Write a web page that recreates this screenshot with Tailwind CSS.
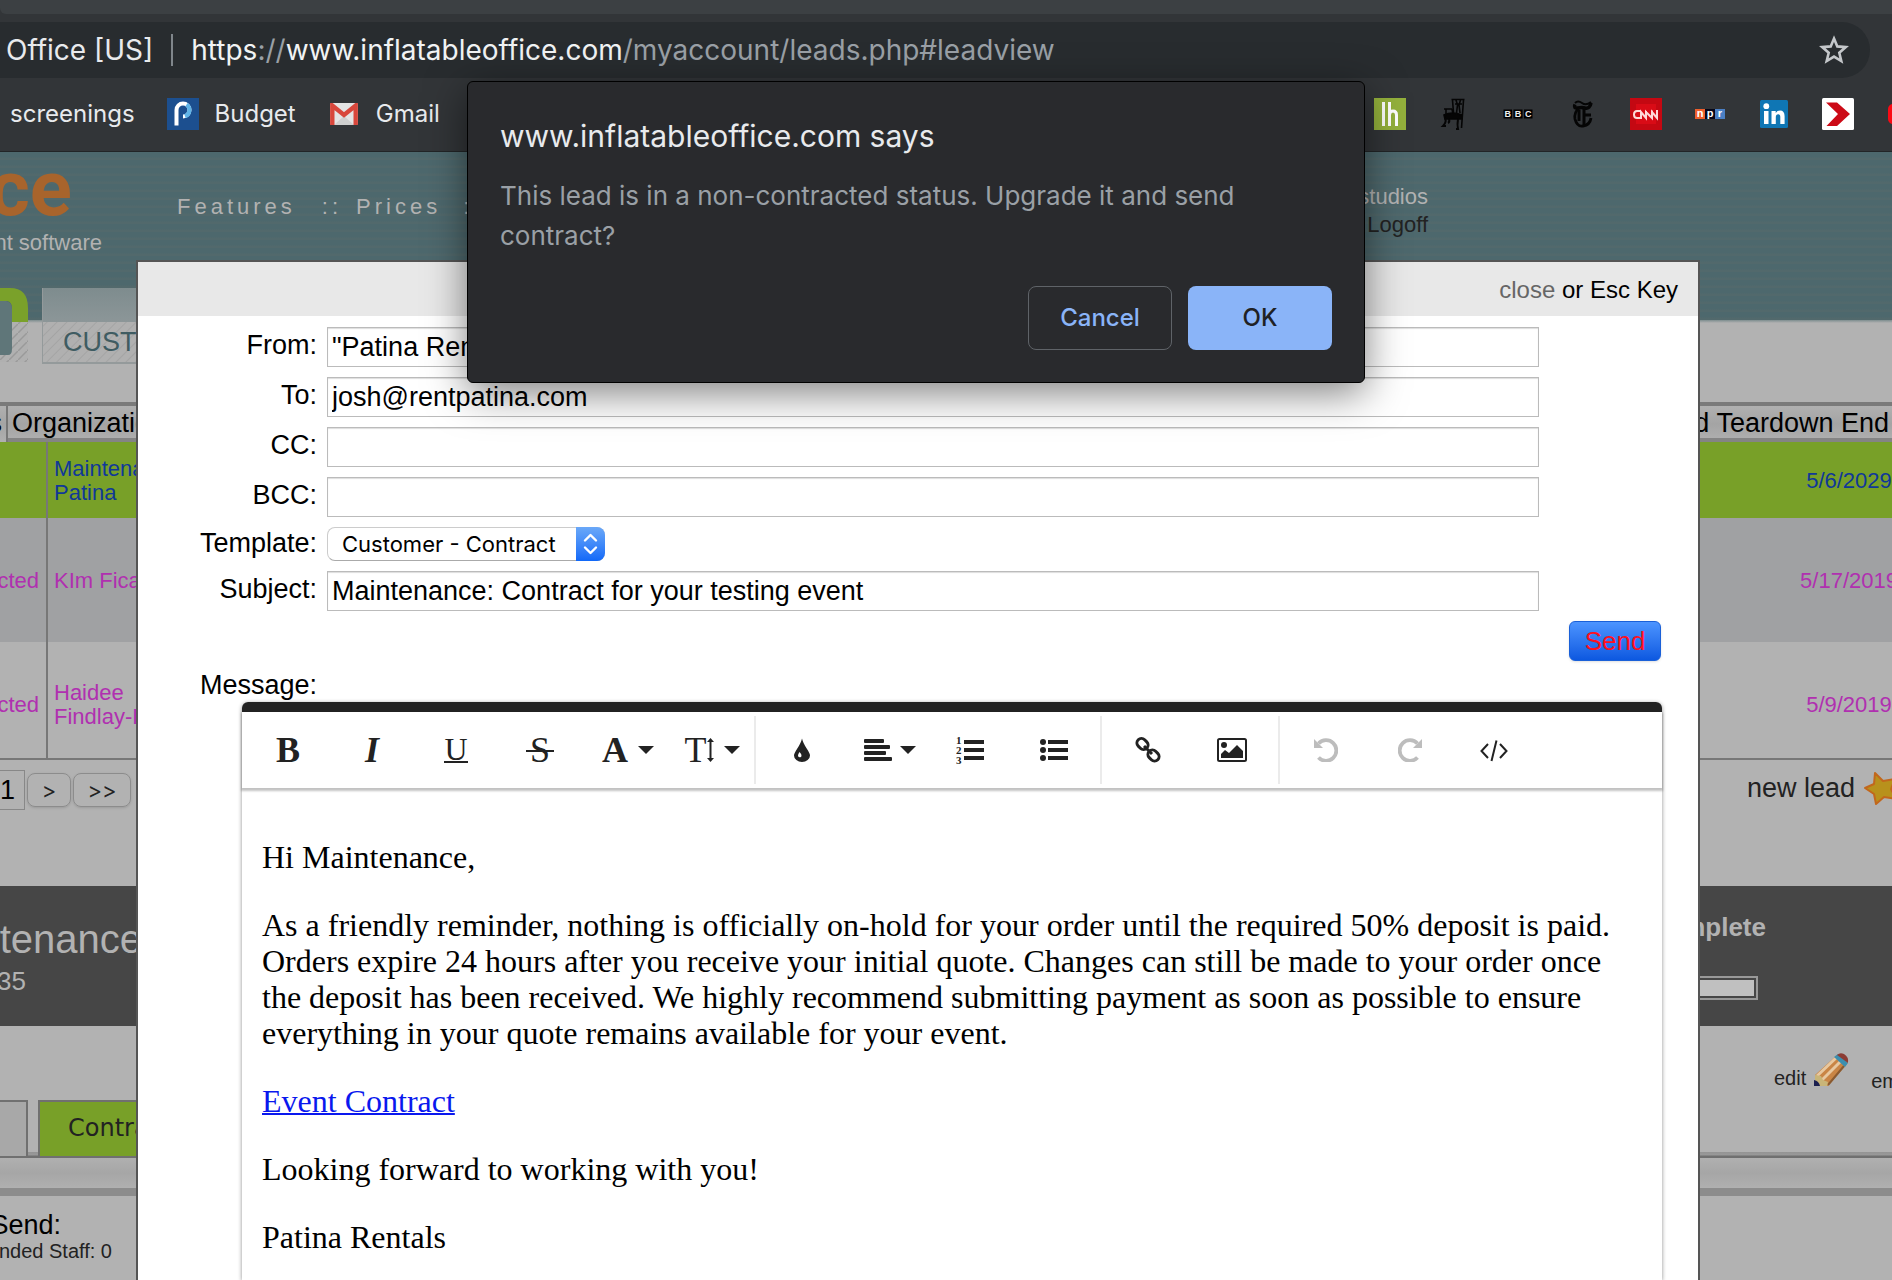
<!DOCTYPE html>
<html lang="en">
<head>
    <meta charset="UTF-8">
    <meta name="viewport" content="width=device-width, initial-scale=1.0">
    <title>InflatableOffice - Leads</title>
    <script src="https://cdn.jsdelivr.net/npm/@tailwindcss/browser@4"></script>
</head>
<body class="relative h-screen overflow-hidden flex flex-col bg-[#b2b2b2] font-['Liberation_Sans',Arial,sans-serif] text-black">

    <!-- Browser bars -->
    <header class="shrink-0 bg-[#323538] border-b border-[#222527] font-[Inter,sans-serif] text-[#e8eaed]">
        <div class="h-[14px] bg-[#3c4043] rounded-bl-md"></div>
        <div class="mt-2 mr-[22px] h-14 rounded-r-full bg-[#282c2f] flex items-center pl-[6px] pr-5 text-[28px] whitespace-nowrap">
            <span>Office [US]</span>
            <span class="w-[2px] h-8 mx-[18px] bg-[#80868b]"></span>
            <span class="text-[#9aa0a6]"><span class="text-[#f1f3f4]">https</span>://<span class="text-[#f1f3f4]">www.inflatableoffice.com</span>/myaccount/leads.php#leadview</span>
            <button class="ml-auto" aria-label="Bookmark this page">
                <svg class="w-8 h-8" viewBox="0 0 32 32" fill="none" stroke="#c4c7ca" stroke-width="2.6"><path d="M16 4.5 19.3 12.400 27.800 13.100 21.300 18.700 23.300 27 16 22.600 8.700 27 10.700 18.700 4.200 13.100 12.700 12.400Z"/></svg>
            </button>
        </div>
        <nav class="h-[73px] flex items-center pl-[10px] pb-[2px] text-[24px] whitespace-nowrap">
            <a href="#">screenings</a>
            <a href="#" class="flex items-center gap-4 ml-8">
                <svg class="w-8 h-8" viewBox="0 0 32 32"><rect width="32" height="32" fill="#1c4f8f"/><path d="M9.500 27.500V12a6.500 6.500 0 1 1 6.500 6.500" fill="none" stroke="#fff" stroke-width="4"/><path d="M19.500 6.600a6.500 6.500 0 0 1-1.500 11.600" fill="none" stroke="#5fb4e8" stroke-width="4"/></svg>
                Budget
            </a>
            <a href="#" class="flex items-center gap-[18px] ml-[34px]">
                <svg class="w-7 h-[22px]" viewBox="0 0 28 22"><rect width="28" height="22" rx="2" fill="#e4e4e4"/><path d="M4 22 14 13 24 22Z" fill="#cfcfcf"/><path d="M2.300 22V2.500L14 12 25.700 2.500V22" fill="none" stroke="#d8473c" stroke-width="4.400"/></svg>
                Gmail
            </a>
            <div class="ml-auto flex items-center gap-8">
                <a href="#" aria-label="Lifehacker"><svg class="w-8 h-8" viewBox="0 0 32 32"><rect width="32" height="32" fill="#94b13c"/><path d="M9.500 4v24M15.500 4v24M15.500 17q0-4 3.500-4t3.500 4v11" fill="none" stroke="#fff" stroke-width="3"/></svg></a>
                <a href="#" aria-label="Chair"><svg class="w-8 h-8" viewBox="0 0 32 32" fill="none" stroke="#050505" stroke-width="1.600"><path d="M13.500 1.500h13M14.500 2l1 13M25.500 2l-2 28M18 2l1.500 5-1 8M22.500 2 21 7l1 8M17 6h7"/><path d="M6 11h8M8 11v6M14 11l1 5"/><path d="M6 17q8-4 18 0v4H7Z" fill="#050505"/><path d="M7 20q2 4-2 8h3M20 21q-1 6 0 10h-2M11 21q1 3-1 4" stroke-width="2"/></svg></a>
                <a href="#" aria-label="BBC News"><svg class="w-8 h-8" viewBox="0 0 32 32" font-family="Liberation Sans" font-size="9" font-weight="700" fill="#eee" text-anchor="middle"><path d="M1.500 11.500h8.500v9H1.500zM11.500 11.500h9v9h-9zM22 11.500h8.500v9H22z" fill="#000"/><text x="5.800" y="19.300">B</text><text x="16" y="19.300">B</text><text x="26.200" y="19.300">C</text></svg></a>
                <a href="#" aria-label="The New York Times"><svg class="w-8 h-8" viewBox="0 0 32 32" fill="none" stroke="#050505"><path d="M9 6.500q-2 4 3 3.500 4-1 7 0 5 1 6-5" stroke-width="3.500"/><path d="M9 5q3-3 7 0t9-1" stroke-width="2"/><path d="M13 10q-5 4-4 11 2 8 8 7 7-1 8-8" stroke-width="2.800"/><path d="M18 9v18M18 17h7M13 12v11" stroke-width="3"/></svg></a>
                <a href="#" aria-label="CNN"><svg class="w-8 h-8" viewBox="0 0 32 32"><rect width="32" height="32" fill="#c40812"/><rect x="6" y="6" width="20" height="20" fill="#d90b16"/><path d="M11 13H7q-3 0-3 3.500T7 20h4V14l5 6V13M16 20V14l6 6V12.500M22 20l0-6 5 6V12" fill="none" stroke="#ffd9d9" stroke-width="2"/></svg></a>
                <a href="#" aria-label="NPR"><svg class="w-8 h-8" viewBox="0 0 32 32" font-family="Liberation Sans" font-weight="700" font-size="11" fill="#fff" text-anchor="middle"><path d="M1 11h10v10H1z" fill="#ee5f2c"/><path d="M11 11h10v10H11z" fill="#06071a"/><path d="M21 11h10v10H21z" fill="#4a7fc4"/><text x="6" y="19">n</text><text x="16" y="18.500">p</text><text x="26" y="19">r</text></svg></a>
                <a href="#" aria-label="LinkedIn"><svg class="w-8 h-8" viewBox="0 0 32 32" fill="#fff"><rect x="2" y="2" width="28" height="28" rx="1.500" fill="#0f76b4"/><circle cx="8.300" cy="8.200" r="2.900"/><path d="M6 13h4.500v13H6zM13.500 13h4.200v2q1.500-2.400 4.300-2.400 4.600 0 4.600 5.600V26h-4.300v-7q0-2.800-2.100-2.800-2.400 0-2.400 2.900V26h-4.300z"/></svg></a>
                <a href="#" aria-label="Bookmark"><svg class="w-8 h-8" viewBox="0 0 32 32"><rect width="32" height="32" rx="1.500" fill="#fff"/><path d="M4 4.500h11L28 16 15 28H4.500L16 16Z" fill="#cc0a16"/></svg></a>
                <a href="#" aria-label="YouTube"><svg class="w-[6px] h-8" viewBox="0 0 6 32"><rect x="2" y="6" width="20" height="20" rx="5" fill="#fa0a14"/></svg></a>
            </div>
        </nav>
    </header>

    <!-- Lead list, dimmed by the open mail window -->
    <main class="relative flex-1 overflow-hidden">
        <section class="h-[250px] bg-[linear-gradient(transparent_168px,#7d8d8f_168px,#b2b2b2_171px),repeating-linear-gradient(#4d686d_0px,#4d686d_5px,#52696c_6px,#52696c_8px)]">
            <div class="h-[136px] flex items-start pt-[2px] whitespace-nowrap text-[22px] leading-7 text-[#b2b2b2]">
                <div class="w-[102px] flex flex-col items-end">
                    <div class="pr-[30px] font-[Roboto,sans-serif] font-bold text-[78px] leading-[70px] text-[#a8642c]">ce</div>
                    <div class="mt-[5px]">nt software</div>
                </div>
                <nav class="flex pt-[39px] ml-[75px] tracking-[4px]">
                    <a href="#">Features</a>
                    <span class="ml-[26px] mr-[14px]">::</span>
                    <a href="#">Prices</a>
                    <span class="ml-[22px]">::</span>
                </nav>
                <div class="ml-auto mr-[464px] pt-[29px] text-right">
                    <div>studios</div>
                    <a href="#" class="text-[#222]">Logoff</a>
                </div>
            </div>
            <div class="flex gap-[14px]">
                <svg class="w-7 h-[78px] shrink-0" viewBox="0 0 28 78">
                    <defs><pattern id="hatch" width="9" height="9" patternUnits="userSpaceOnUse"><path d="M-2 11 11-2" stroke="#9a9a9a" stroke-width="1.500"/></pattern></defs>
                    <path d="M0 34h28v40H0z" fill="#b0b0b0"/><path d="M0 34h28v40H0z" fill="url(#hatch)"/>
                    <path d="M0 0h10q18 0 18 20v14H12V20q0-6-5-7H0z" fill="#7aa12a"/>
                    <path d="M0 13h6q6 1 6 8v40q0 6-4 6H0z" fill="#5f7679"/>
                </svg>
                <a href="#" class="h-[76px] w-[180px] border-l border-b-2 border-[#949a9b] bg-[linear-gradient(#7e8c8e,#8c9698_34px,transparent_34px),repeating-linear-gradient(135deg,#b0b0b0_0px,#b0b0b0_5px,#a4a4a4_6px,#b0b0b0_7px)] pl-5 pt-[34px] text-[27px] leading-[40px] text-[#3f5c62]">CUSTOMERS</a>
            </div>
        </section>

        <table class="block w-full text-[22px] leading-6 text-[#b030b0]">
            <thead class="block">
                <tr class="flex h-10 border-t-4 border-[#7a7a7a] bg-linear-to-b from-[#b0b0b0] via-[#a4a4a4] to-[#b0b0b0] text-[27px] leading-[34px] text-black whitespace-nowrap">
                    <th class="w-2 h-[36px] flex justify-end pr-1 border-r-2 border-[#777] font-normal">Status</th>
                    <th class="flex-1 h-9 pl-1 border-b-4 border-[#848484] text-left font-normal">Organization</th>
                    <th class="h-9 pr-[3px] border-b-4 border-[#848484] font-normal">End Teardown End</th>
                </tr>
            </thead>
            <tbody class="block border-b-2 border-[#777]">
                <tr class="flex h-[76px] bg-[#78a028] text-[#103898]">
                    <td class="w-12 border-r-2 border-[#777]"></td>
                    <td class="flex-1 flex items-center pl-[6px] pt-px">Maintenance<br>Patina</td>
                    <td class="w-[86px] pt-px flex items-center justify-center">5/6/2029</td>
                </tr>
                <tr class="flex h-[124px] bg-[#a0a1a3]">
                    <td class="w-12 pr-[7px] pt-px flex items-center justify-end border-r-2 border-[#777]">contracted</td>
                    <td class="flex-1 flex items-center pl-[6px] pt-px">KIm Ficaro</td>
                    <td class="w-[86px] pt-px flex items-center justify-center">5/17/2019</td>
                </tr>
                <tr class="flex h-[116px]">
                    <td class="w-12 pr-[7px] pt-[10px] flex items-center justify-end border-r-2 border-[#777]">contracted</td>
                    <td class="flex-1 flex items-center pl-[6px] pt-[10px]">Haidee<br>Findlay-Hill</td>
                    <td class="w-[86px] pt-[10px] flex items-center justify-center">5/9/2019</td>
                </tr>
            </tbody>
        </table>

        <section class="h-[126px] flex items-start justify-between pt-[10px]">
            <div class="flex items-center gap-[2px] font-[Inter,sans-serif] text-[22px] text-[#222]">
                <input type="text" value="1" aria-label="Page" class="w-[25px] h-10 border border-l-0 border-[#888] text-[27px] text-black font-['Liberation_Sans',Arial,sans-serif]">
                <button class="w-11 h-[34px] border border-[#8c8c8c] rounded-lg shadow-sm">&gt;</button>
                <button class="w-[58px] h-[34px] border border-[#8c8c8c] rounded-lg shadow-sm">&gt;&gt;</button>
            </div>
            <a href="#" class="flex items-center gap-[9px] text-[27px] leading-9 text-[#222]">
                new lead
                <svg class="w-7 h-9" viewBox="0 0 28 36"><path d="M11 3 19 11 31 9 27 19 32 29 20 27 12 34 10 24 1 18 10 14Z" fill="#b8911c" stroke="#c2671c" stroke-width="2" stroke-linejoin="round"/></svg>
            </a>
        </section>

        <section class="h-[140px] flex justify-between bg-[#464646] text-[26px] text-[#b2b2b2]">
            <div class="pt-[29px]">
                <h2 class="w-[142px] flex justify-end text-[40px] leading-[48px]">Maintenance</h2>
                <div class="mt-1 w-[26px] flex justify-end leading-7">35</div>
            </div>
            <div class="pt-[26px] mr-[126px] font-bold leading-[30px]">
                Complete
                <div class="mt-[34px] mr-2 h-6 border-2 border-[#999] p-[2px]"><div class="h-full bg-[#c0c0c0]"></div></div>
            </div>
        </section>

        <section class="h-[132px] flex justify-between bg-[linear-gradient(transparent_126px,#949494_126px,#999_129px,#707070_130px)]">
            <nav class="flex items-end gap-[10px] font-['DejaVu_Sans',sans-serif] text-[24px] text-[#222]">
                <a href="#" class="w-7 h-[58px] border-2 border-l-0 border-[#707070] bg-[#a8a8a8]" aria-label="Details"></a>
                <a href="#" class="w-[160px] h-[58px] border-2 border-[#707070] bg-[#78a028] pl-7 leading-[52px]">Contract</a>
            </nav>
            <div class="w-[118px] pt-[26px] flex items-start text-[20px] leading-5 text-[#222]">
                <a href="#" class="flex items-end gap-[7px]">
                    edit
                    <svg class="w-9 h-9" viewBox="0 0 36 36">
                        <path d="M2 23 24 3 34 12 15 34H6Z" fill="#c98545"/>
                        <path d="M4 24 24 5M9 28 29 8" stroke="#e8c8a0" stroke-width="3"/>
                        <path d="M15 33 31 14" stroke="#8a5a30" stroke-width="2"/>
                        <path d="M2 23 8 24 10 28 15 30 14 34H2Z" fill="#c9b578"/>
                        <path d="M21 5 25 2 35 11 32 15Z" fill="#3c8fb0"/>
                        <path d="M24 3q3-3 7-1 5 3 4 9Z" fill="#8c3c34"/>
                        <path d="M1 34V28q5 1 6 6Z" fill="#1c2050"/>
                    </svg>
                </a>
                <a href="#" class="ml-[22px] pt-[19px]">email</a>
            </div>
        </section>
        <div class="h-[38px] border-b-8 border-[#8c8c8c] bg-linear-to-b from-[#b0b0b0] via-[#a6a6a6] to-[#b0b0b0]"></div>
        <section class="pt-4 leading-[26px] whitespace-nowrap">
            <div class="w-[61px] flex justify-end text-[27px]">Send:</div>
            <div class="w-[112px] flex justify-end text-[20px] text-[#222]">Recommended Staff: 0</div>
        </section>

        <!-- Mail window -->
        <div class="absolute top-[108px] bottom-0 left-[136px] right-[192px] flex flex-col bg-white border-2 border-b-0 border-[#555]">
            <div class="h-[54px] shrink-0 bg-[#e8e8e8] pr-5 text-right text-[24px] leading-[56px]"><a href="#" class="text-[#666]">close</a> or Esc Key</div>
            <form class="flex-1 flex flex-col pt-[11px] text-[27px] leading-[30px]">
                <div class="flex flex-col gap-[10px] pr-[159px]">
                    <div class="flex gap-[10px]">
                        <label for="from" class="w-[179px] pt-[3px] text-right">From:</label>
                        <input id="from" type="text" value="&quot;Patina Rentals&quot;" class="flex-1 h-10 px-1 border border-[#bbb] shadow-[inset_0_1px_1px_#ddd]">
                    </div>
                    <div class="flex gap-[10px]">
                        <label for="to" class="w-[179px] pt-[3px] text-right">To:</label>
                        <input id="to" type="text" value="josh@rentpatina.com" class="flex-1 h-10 px-1 border border-[#bbb] shadow-[inset_0_1px_1px_#ddd]">
                    </div>
                    <div class="flex gap-[10px]">
                        <label for="cc" class="w-[179px] pt-[3px] text-right">CC:</label>
                        <input id="cc" type="text" class="flex-1 h-10 px-1 border border-[#bbb] shadow-[inset_0_1px_1px_#ddd]">
                    </div>
                    <div class="flex gap-[10px]">
                        <label for="bcc" class="w-[179px] pt-[3px] text-right">BCC:</label>
                        <input id="bcc" type="text" class="flex-1 h-10 px-1 border border-[#bbb] shadow-[inset_0_1px_1px_#ddd]">
                    </div>
                    <div class="flex gap-[10px]">
                        <label for="template" class="w-[179px] pt-px text-right">Template:</label>
                        <div class="relative w-[278px] h-[34px]">
                            <select id="template" class="appearance-none w-full h-full pl-[14px] rounded-lg border border-[#ccc] border-b-[#aaa] bg-white font-[Inter,sans-serif] text-[22px] leading-[30px]">
                                <option>Customer - Contract</option>
                            </select>
                            <span class="absolute right-0 top-0 w-[29px] h-[34px] rounded-r-lg bg-linear-to-b from-[#6aa8f8] to-[#1068f8] pointer-events-none">
                                <svg class="w-[29px] h-[34px]" viewBox="0 0 29 34" fill="none" stroke="#fff" stroke-width="2.400" stroke-linecap="round" stroke-linejoin="round"><path d="M9 13.500 14.500 8 20 13.500M9 20.500 14.500 26 20 20.500"/></svg>
                            </span>
                        </div>
                    </div>
                    <div class="flex gap-[10px]">
                        <label for="subject" class="w-[179px] pt-[3px] text-right">Subject:</label>
                        <input id="subject" type="text" value="Maintenance: Contract for your testing event" class="flex-1 h-10 px-1 border border-[#bbb] shadow-[inset_0_1px_1px_#ddd]">
                    </div>
                </div>
                <button type="button" class="self-end mt-[10px] mr-[37px] w-[92px] h-10 rounded-md border border-[#1a60d8] bg-linear-to-b from-[#4c94ff] to-[#0c58e0] text-[26px] text-[#ff1020] shadow-sm">Send</button>
                <div class="mt-[9px] w-[179px] h-8 text-right">Message:</div>

                <div class="flex-1 flex flex-col ml-[104px] mr-9 rounded-t-md border-t-10 border-[#222] shadow-[0_1px_4px_rgba(0,0,0,0.45)]">
                    <div class="flex items-center h-[76px] pl-1 shadow-[0_2px_2px_1px_rgba(0,0,0,0.24)] font-['Liberation_Serif',serif] text-[36px] leading-9 text-[#222] z-10 shrink-0">
                        <button type="button" class="w-[84px] font-bold" aria-label="Bold">B</button>
                        <button type="button" class="w-[84px] font-bold italic" aria-label="Italic">I</button>
                        <button type="button" class="w-[84px] flex justify-center" aria-label="Underline"><span class="h-[26px] border-b-2 border-[#222] text-[32px] leading-6">U</span></button>
                        <button type="button" class="w-[84px] flex justify-center" aria-label="Strikethrough"><span class="relative px-1">S<span class="absolute left-0 right-0 top-[18px] h-[2px] bg-[#222]"></span></span></button>
                        <button type="button" class="w-[84px] flex items-center justify-center gap-[10px] pl-2" aria-label="Text colour"><span class="font-bold">A</span><svg class="w-4 h-2" viewBox="0 0 16 8" fill="#222"><path d="M0 0h16L8 8z"/></svg></button>
                        <button type="button" class="w-[84px] flex items-center justify-center gap-[10px] pl-2" aria-label="Font size"><span class="flex items-center">T<svg class="w-[7px] h-6" viewBox="0 0 7 24" fill="#222"><path d="M3.500 0 7 4H4.500v16H7L3.500 24 0 20h2.500V4H0z"/></svg></span><svg class="w-4 h-2" viewBox="0 0 16 8" fill="#222"><path d="M0 0h16L8 8z"/></svg></button>
                        <span class="w-[2px] h-[68px] mx-1 bg-[#ebebeb]"></span>
                        <button type="button" class="w-[84px] flex justify-center" aria-label="Ink colour"><svg class="w-4 h-6" viewBox="0 0 16 24"><path d="M8 0.500Q9 5 13 11q3 4.500 3 6.500a8 6.500 0 0 1-16 0q0-2 3-6.500Q7 5 8 .5Z" fill="#222"/><path d="M5.500 14q3 3 1.500 5-3 1-3-1.500 0-1.500 1.500-3.500Z" fill="#fff"/></svg></button>
                        <button type="button" class="w-[84px] flex items-center justify-center gap-2 pl-2" aria-label="Align"><svg class="w-7 h-6" viewBox="0 0 28 24" fill="#222"><rect y="1" width="20" height="4" rx="1"/><rect y="7" width="26" height="4" rx="1"/><rect y="13" width="22" height="4" rx="1"/><rect y="19" width="28" height="4" rx="1"/></svg><svg class="w-4 h-2" viewBox="0 0 16 8" fill="#222"><path d="M0 0h16L8 8z"/></svg></button>
                        <button type="button" class="w-[84px] flex justify-center" aria-label="Numbered list"><svg class="w-7 h-7" viewBox="0 0 28 28" fill="#222" font-family="Liberation Serif" font-weight="700" font-size="11"><text x="0" y="8">1</text><text x="0" y="18">2</text><text x="0" y="28">3</text><rect x="8" y="4" width="20" height="4"/><rect x="8" y="12" width="20" height="4"/><rect x="8" y="20" width="20" height="4"/></svg></button>
                        <button type="button" class="w-[84px] flex justify-center" aria-label="Bulleted list"><svg class="w-7 h-7" viewBox="0 0 28 28" fill="#222"><circle cx="3" cy="6" r="3"/><circle cx="3" cy="14" r="3"/><circle cx="3" cy="22" r="3"/><rect x="8" y="4" width="20" height="4"/><rect x="8" y="12" width="20" height="4"/><rect x="8" y="20" width="20" height="4"/></svg></button>
                        <span class="w-[2px] h-[68px] mx-1 bg-[#ebebeb]"></span>
                        <button type="button" class="w-[84px] flex justify-center" aria-label="Insert link"><svg class="w-7 h-7" viewBox="0 0 28 28" fill="none" stroke="#222" stroke-width="3"><rect x="-6" y="-4.500" width="12" height="9" rx="4.500" transform="translate(8.500 8) rotate(45)"/><rect x="-6" y="-4.500" width="12" height="9" rx="4.500" transform="translate(19.500 19.500) rotate(45)"/><path d="M10 10 18 18"/></svg></button>
                        <button type="button" class="w-[84px] flex justify-center" aria-label="Insert image"><svg class="w-[30px] h-6" viewBox="0 0 30 24" fill="#222"><rect x="1" y="1" width="28" height="22" rx="1.500" fill="none" stroke="#222" stroke-width="2"/><circle cx="7" cy="7" r="3"/><path d="M4 20V16L8 12 12 15 20 7 26 13V20Z"/></svg></button>
                        <span class="w-[2px] h-[68px] mx-1 bg-[#ebebeb]"></span>
                        <button type="button" class="w-[84px] flex justify-center" aria-label="Undo"><svg class="w-6 h-6" viewBox="0 0 24 24"><path d="M4.500 5.500A10.300 10.300 0 1 1 4.500 19.500" fill="none" stroke="#bdbdbd" stroke-width="3.800"/><path d="M0 1V10H9Z" fill="#bdbdbd"/></svg></button>
                        <button type="button" class="w-[84px] flex justify-center" aria-label="Redo"><svg class="w-6 h-6" viewBox="0 0 24 24"><path d="M19.500 5.500A10.300 10.300 0 1 0 19.500 19.500" fill="none" stroke="#bdbdbd" stroke-width="3.800"/><path d="M24 1V10H15Z" fill="#bdbdbd"/></svg></button>
                        <button type="button" class="w-[84px] flex justify-center" aria-label="Code view"><svg class="w-7 h-6" viewBox="0 0 28 24" fill="none" stroke="#222" stroke-width="2"><path d="M8 6 1.500 13 8 20M20 6l6.500 7L20 20M16.500 2.500 11.500 23"/></svg></button>
                    </div>
                    <div class="flex-1 pt-[51px] px-5 flex flex-col gap-8 font-['Liberation_Serif',serif] text-[32px] leading-9">
                        <p>Hi Maintenance,</p>
                        <p>As a friendly reminder, nothing is officially on-hold for your order until the required 50% deposit is paid. Orders expire 24 hours after you receive your initial quote. Changes can still be made to your order once the deposit has been received. We highly recommend submitting payment as soon as possible to ensure everything in your quote remains available for your event.</p>
                        <p><a href="#" class="text-[#0a18ee] underline decoration-2">Event Contract</a></p>
                        <p>Looking forward to working with you!</p>
                        <p>Patina Rentals</p>
                    </div>
                </div>
            </form>
        </div>
    </main>

    <!-- Browser confirm dialog -->
    <div role="dialog" aria-labelledby="dialogTitle" class="absolute z-20 top-[81px] left-[467px] w-[898px] h-[302px] rounded-md border border-black bg-[#292a2d] shadow-[0_10px_40px_rgba(0,0,0,0.5)] pt-[34px] px-8 pb-8 flex flex-col font-[Inter,sans-serif]">
        <h1 id="dialogTitle" class="text-[30px] leading-10 text-[#e8eaed]">www.inflatableoffice.com says</h1>
        <p class="mt-5 text-[26px] leading-10 text-[#9aa0a6]">This lead is in a non-contracted status. Upgrade it and send contract?</p>
        <div class="mt-auto flex justify-end gap-4 text-[24px] font-medium">
            <button class="w-36 h-16 rounded-lg border border-[#5f6368] text-[#8ab4f8]">Cancel</button>
            <button class="w-36 h-16 rounded-lg bg-[#8ab4f8] text-[#202124]">OK</button>
        </div>
    </div>
</body>
</html>
